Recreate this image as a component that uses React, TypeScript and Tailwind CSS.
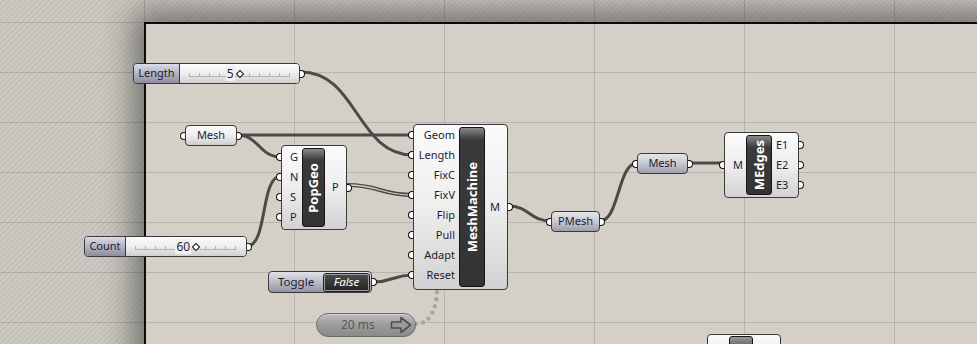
import React from "react";

const labelColor = "text-[#1f1a2e]";

function InPort() {
  return (
    <span className="absolute left-[-6px] top-1/2 -translate-y-1/2 w-[5px] h-[8px] rounded-l-full border border-r-0 border-[#111] bg-white" />
  );
}
function OutPort() {
  return (
    <span className="absolute right-[-6px] top-1/2 -translate-y-1/2 w-[5px] h-[8px] rounded-r-full border border-l-0 border-[#111] bg-white" />
  );
}

function Bar({ name }: { name: string }) {
  return (
    <div className="flex-1 flex items-center justify-center rounded-[3px] border border-[#151515] bg-[linear-gradient(to_bottom,#8a8a8a_0px,#4a4a4a_9px,#3a3a3a_12px,#333333_100%)]">
      <span className="[writing-mode:vertical-rl] rotate-180 text-white font-bold text-[13px] leading-none">
        {name}
      </span>
    </div>
  );
}

type CompProps = {
  x: number;
  y: number;
  w: number;
  h: number;
  inputs: string[];
  outputs: string[];
  name: string;
  leftW: number;
  barW: number;
  inPadT: number;
  inAlign: "left" | "right";
  inPad: number;
  outPad: number;
  outCenter?: boolean;
  inCenter?: boolean;
};

function Comp(p: CompProps) {
  return (
    <div
      className="absolute flex rounded-[4px] border border-[#3a3a3a] bg-linear-to-b from-[#fbfbfb] via-[#eeeeee] to-[#d2d2d2]"
      style={{ left: p.x, top: p.y, width: p.w, height: p.h }}
    >
      <div
        className={`flex flex-col ${p.inCenter ? "justify-center" : ""}`}
        style={{ width: p.leftW, paddingTop: p.inPadT }}
      >
        {p.inputs.map((l) => (
          <div
            key={l}
            className={`relative h-[20px] flex items-center text-[11px] ${labelColor} ${
              p.inAlign === "right" ? "justify-end" : "justify-start"
            }`}
            style={p.inAlign === "right" ? { paddingRight: p.inPad } : { paddingLeft: p.inPad }}
          >
            <InPort />
            {l}
          </div>
        ))}
      </div>
      <div className="flex flex-col py-[2px]" style={{ width: p.barW }}>
        <Bar name={p.name} />
      </div>
      <div className={`flex-1 flex flex-col ${p.outCenter ? "justify-center" : ""}`}>
        {p.outputs.map((l) => (
          <div
            key={l}
            className={`relative h-[20px] flex items-center text-[11px] ${labelColor}`}
            style={{ paddingLeft: p.outPad }}
          >
            <OutPort />
            {l}
          </div>
        ))}
      </div>
    </div>
  );
}

function Param({ x, y, w, label, dark }: { x: number; y: number; w: number; label: string; dark?: boolean }) {
  return (
    <div
      className={`absolute h-[21px] flex items-center justify-center rounded-[4px] border border-[#3a3a3a] text-[11px] ${labelColor} ${
        dark
          ? "bg-linear-to-b from-[#e6e6ec] via-[#c8c8d2] to-[#9d9dac]"
          : "bg-linear-to-b from-[#fbfbfb] via-[#eeeeee] to-[#cfcfcf]"
      }`}
      style={{ left: x, top: y, width: w }}
    >
      <InPort />
      {label}
      <OutPort />
    </div>
  );
}

function Track({ w, ticks }: { w: number; ticks: number }) {
  const xs = Array.from({ length: ticks + 1 }, (_, i) => 0.5 + (i * (w - 1)) / ticks);
  return (
    <svg width={w} height={6} className="absolute left-0 top-[8px]">
      <line x1={0} y1={4.5} x2={w} y2={4.5} stroke="#b4b4b4" strokeWidth={1} />
      {xs.map((x, i) => (
        <line key={i} x1={x} y1={1} x2={x} y2={5} stroke="#b4b4b4" strokeWidth={1} />
      ))}
    </svg>
  );
}

function Slider({
  x,
  y,
  w,
  labelW,
  label,
  value,
  pct,
}: {
  x: number;
  y: number;
  w: number;
  labelW: number;
  label: string;
  value: string;
  pct: number;
}) {
  return (
    <div
      className="absolute h-[21px] flex rounded-[4px] border border-[#3a3a3a]"
      style={{ left: x, top: y, width: w }}
    >
      <div
        className={`h-full flex items-center justify-center rounded-l-[3px] border-r border-[#3a3a3a] text-[11px] ${labelColor} bg-linear-to-b from-[#dcdce6] via-[#b4b4c4] to-[#8d8d9f]`}
        style={{ width: labelW }}
      >
        {label}
      </div>
      <div className="flex-1 h-full flex px-[9px] rounded-r-[3px] bg-linear-to-b from-[#fbfbfb] via-[#eeeeee] to-[#d0d0d0]">
        <div className="relative flex-1 flex items-center">
          <Track w={101} ticks={10} />
          <div className="relative flex justify-end" style={{ width: `${pct}%` }}>
            <span className={`text-[12px] leading-[15px] mr-[5px] ${labelColor} px-[1px] bg-[#f0f0f0]`}>{value}</span>
          </div>
          <span className="relative -ml-[3px] mt-[1px] w-[6px] h-[6px] rotate-45 border-[1.5px] border-[#111] bg-white" />
        </div>
      </div>
      <OutPort />
    </div>
  );
}

export default function App() {
  return (
    <div className="relative w-[977px] h-[344px] overflow-hidden font-['Noto_Sans',sans-serif] [background-image:repeating-linear-gradient(135deg,#ccc9c2_0px,#ccc9c2_2px,#c4c1ba_2px,#c4c1ba_4px)]">
      {/* canvas */}
      <div className="absolute left-[144px] top-[22px] right-[-40px] bottom-[-40px] bg-[#d4d0c8] shadow-[0_0_30px_10px_rgba(0,0,0,0.45)]" />
      {/* grid */}
      <div className="absolute inset-0 [background-image:linear-gradient(to_right,rgba(0,0,0,0.13)_1px,transparent_1px),linear-gradient(to_bottom,rgba(0,0,0,0.13)_1px,transparent_1px)] [background-size:150px_50px] [background-position:144px_22px]" />
      {/* canvas border drawn over the grid */}
      <div className="absolute left-[144px] top-[22px] right-[-10px] bottom-[-10px] border-t-2 border-l-2 border-[#0a0a0a]" />

      {/* wires */}
      <svg className="absolute inset-0" width={977} height={344}>
        <g fill="none" stroke="#4a4a4a" strokeWidth={3} strokeLinecap="round">
          <path d="M301,72 C357,72 357,155 413,155" />
          <path d="M237,135 L413,135" />
          <path d="M237,135 C259,135 259,157 281,157" />
          <path d="M247,246 C268,246 260,176 281,176" />
          <path d="M508,206 C530,206 529,221 551,221" />
          <path d="M600,221 C619,221 618,163 637,163" />
          <path d="M688,163 L724,163" />
          <path d="M373,282 C393,282 393,275 413,275" />
        </g>
        <path d="M347,185 C380,185 380,195 413,195" fill="none" stroke="#4a4a4a" strokeWidth={4.2} />
        <path d="M347,185 C380,185 380,195 413,195" fill="none" stroke="#d4d0c8" strokeWidth={1.3} />
        <path
          d="M416,324 C431,324 437,306 437,290"
          fill="none"
          stroke="#a9a69f"
          strokeWidth={4.5}
          strokeLinecap="round"
          strokeDasharray="0 7"
        />
      </svg>

      {/* sliders */}
      <Slider x={133} y={63} w={167} labelW={46} label="Length" value="5" pct={50} />
      <Slider x={84} y={236} w={163} labelW={41} label="Count" value="60" pct={60} />

      {/* params */}
      <Param x={185} y={125} w={52} label="Mesh" />
      <Param x={551} y={211} w={49} label="PMesh" dark />
      <Param x={637} y={153} w={51} label="Mesh" dark />

      {/* PopGeo */}
      <Comp
        x={281}
        y={145}
        w={66}
        h={85}
        inputs={["G", "N", "S", "P"]}
        outputs={["P"]}
        name="PopGeo"
        leftW={20}
        barW={23}
        inPadT={1}
        inAlign="left"
        inPad={8}
        outPad={7}
        outCenter
      />

      {/* MeshMachine */}
      <Comp
        x={413}
        y={124}
        w={95}
        h={166}
        inputs={["Geom", "Length", "FixC", "FixV", "Flip", "Pull", "Adapt", "Reset"]}
        outputs={["M"]}
        name="MeshMachine"
        leftW={45}
        barW={26}
        inPadT={0}
        inAlign="right"
        inPad={4}
        outPad={5}
        outCenter
      />

      {/* MEdges */}
      <Comp
        x={724}
        y={132}
        w={75}
        h={66}
        inputs={["M"]}
        outputs={["E1", "E2", "E3"]}
        name="MEdges"
        leftW={21}
        barW={26}
        inPadT={0}
        inAlign="left"
        inPad={8}
        outPad={4}
        inCenter
        outCenter
      />

      {/* Toggle */}
      <div className="absolute left-[268px] top-[271px] w-[104px] h-[22px] flex items-center rounded-[4px] border border-[#3a3a3a] bg-linear-to-b from-[#e2e2ea] via-[#bcbcc8] to-[#9292a2]">
        <span className={`pl-[9px] text-[11.5px] ${labelColor}`}>Toggle</span>
        <div className="ml-auto mr-[2px] w-[45px] h-[17px] flex items-center justify-center rounded-[2px] border border-[#9a9a9a] bg-linear-to-b from-[#4a4a4a] to-[#262626] outline outline-1 outline-[#222]">
          <span className="text-white italic text-[11.5px] leading-none">False</span>
        </div>
        <OutPort />
      </div>

      {/* Timer */}
      <div className="absolute left-[316px] top-[313px] w-[100px] h-[24px] flex items-center pl-[24px] pr-[3px] rounded-full border border-[#6c6c6c] bg-linear-to-b from-[#bdbdbd] via-[#9c9c9c] to-[#8a8a8a] shadow-[inset_0_1px_0_rgba(255,255,255,0.35)]">
        <span className="text-[12px] text-[#575757]">20 ms</span>
        <svg className="ml-auto" width={22} height={18} viewBox="0 0 22 18">
          <path
            d="M1.5,6 L11,6 L11,1.5 L20.5,9 L11,16.5 L11,12 L1.5,12 Z"
            fill="#9a9a9a"
            stroke="#505050"
            strokeWidth={1.6}
            strokeLinejoin="round"
          />
        </svg>
      </div>

      {/* partial bottom component */}
      <div className="absolute left-[707px] top-[334px] w-[74px] h-[30px] flex pl-[21px] pt-[1px] rounded-[4px] border border-[#3a3a3a] bg-linear-to-b from-[#fbfbfb] to-[#e0e0e0]">
        <div className="w-[24px] h-[26px] rounded-[3px] border border-[#151515] bg-[linear-gradient(to_bottom,#9a9a9a_0px,#6a6a6a_8px,#3a3a3a_12px)]" />
      </div>
    </div>
  );
}
